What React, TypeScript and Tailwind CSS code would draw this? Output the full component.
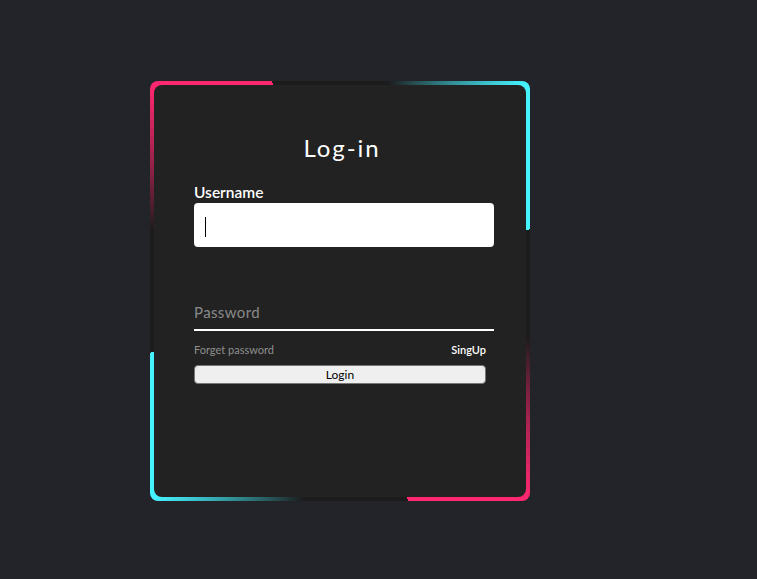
export default function App() {
  return (
    <div className="min-h-screen bg-[#23242a] pl-[150px] pt-[81px] font-['Lato','Noto_Sans',sans-serif]">
      {/* card with gradient border */}
      <div className="h-[420px] w-[380px] rounded-lg bg-[conic-gradient(from_0deg_at_50%_50%,#1c1c1c_0deg,#1c1c1c_13deg,#45f3ff_42deg,#45f3ff_72deg,#1c1c1c_72deg,#1c1c1c_104deg,#ff2770_138deg,#ff2770_162deg,#1c1c1c_162deg,#1c1c1c_190deg,#45f3ff_222deg,#45f3ff_252deg,#1c1c1c_252deg,#1c1c1c_288deg,#ff2770_318deg,#ff2770_342deg,#1c1c1c_342deg)] p-1">
        <div className="h-full rounded-lg bg-[#222222] pl-10 pr-8 pt-[47px]">
          <h2 className="pr-1 text-center text-[24px] leading-8 tracking-[0.08em] text-white">Log-in</h2>

          <label className="mb-px mt-[18px] block text-[15.5px] font-semibold leading-5 text-white">Username</label>
          <div className="relative">
            <input className="block h-11 w-full rounded bg-white px-3 text-black caret-transparent outline-none" />
            <span className="absolute left-[11px] top-[14px] h-5 w-px bg-black" />
          </div>

          <div className="mt-[54px] border-b-2 border-white pb-[6px]">
            <input
              placeholder="Password"
              type="password"
              className="block h-[22px] w-full bg-transparent text-[15px] leading-[22px] tracking-wide text-white placeholder:text-[#8a8a8a] outline-none"
            />
          </div>

          <div className="mr-2 mt-[11px] flex items-center justify-between text-[11px] leading-4">
            <a className="text-[#8f8f8f]">Forget password</a>
            <a className="font-semibold text-white">SingUp</a>
          </div>

          <button className="mr-2 mt-[7px] block h-[19px] w-[292px] rounded-sm border border-[#767676] bg-[#efefef] text-[12px] leading-none text-black">
            Login
          </button>
        </div>
      </div>
    </div>
  );
}
